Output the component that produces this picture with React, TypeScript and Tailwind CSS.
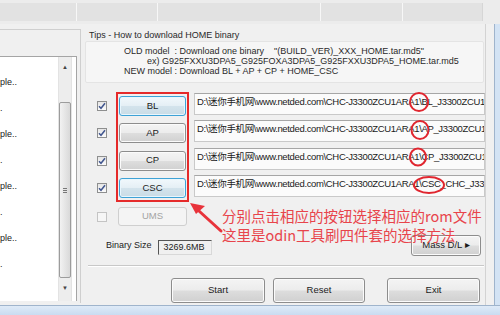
import React from "react";

const ui = "font-['Liberation_Sans','Noto_Sans_CJK_SC',sans-serif]";

function WinButton({
  label,
  focused,
  disabled,
  className,
}: {
  label: string;
  focused?: boolean;
  disabled?: boolean;
  className?: string;
}) {
  const look = disabled
    ? "border-[#cfcfcf] bg-[#f4f4f4] text-[#a3a3a3]"
    : focused
      ? "border-[#3ea2d6] bg-[linear-gradient(to_bottom,#f1f8fc_0%,#e5eff5_48%,#d3e3ec_52%,#c9dce6_100%)] text-[#1c1c1c] shadow-[inset_0_0_0_1px_#e8f6fd]"
      : "border-[#8d8d8d] bg-[linear-gradient(to_bottom,#f4f4f4_0%,#ececec_48%,#dddddd_52%,#d0d0d0_100%)] text-[#1c1c1c] shadow-[inset_0_0_0_1px_#fbfbfb]";
  return (
    <div
      className={`flex items-center justify-center rounded-[3px] border text-[9.5px] ${look} ${className ?? ""}`}
    >
      {label}
    </div>
  );
}

function Check({ on }: { on: boolean }) {
  return (
    <div
      className={`w-[10px] h-[10px] border ${
        on ? "border-[#8e8f8f] bg-[linear-gradient(to_bottom,#e6e6e6,#fbfbfb)]" : "border-[#c4c4c4] bg-[#f6f6f6]"
      } flex items-center justify-center`}
    >
      {on && (
        <svg width="8" height="8" viewBox="0 0 8 8">
          <path d="M1 4.2 L3 6.3 L7 1.3" fill="none" stroke="#41568f" strokeWidth="1.5" />
        </svg>
      )}
    </div>
  );
}

const prefix = "D:\\迷你手机网\\www.netded.com\\CHC-J3300ZCU1ARA1\\";
const fields = ["BL_J3300ZCU1ARA", "AP_J3300ZCU1ARA", "CP_J3300ZCU1AR", "CSC_CHC_J3300C"];

const logLines = ["ple..", ".", "ple..", ".", "ple..", ".", "ple..", "."];

export default function App() {
  return (
    <div className={`relative w-[500px] h-[315px] overflow-hidden bg-[#f0f0f0] ${ui}`}>
      <div className="flex flex-col h-[305px]">
        {/* top strip */}
        <div className="h-[24px] shrink-0 flex items-start pt-[3px] bg-[#ececec]">
          <div className="h-[18px] w-[77px] bg-[#e2e2e2] border-r border-[#f7f7f7]" />
          <div className="h-[18px] w-[81px] bg-[#e2e2e2] border-r border-[#f7f7f7]" />
          <div className="h-[18px] w-[163px] bg-[#e2e2e2] border-r border-[#f7f7f7]" />
          <div className="h-[18px] w-[82px] bg-[#e2e2e2] border-r border-[#f7f7f7]" />
          <div className="h-[18px] w-[80px] bg-[#e2e2e2] border-r border-[#d6d6d6]" />
        </div>

        <div className="flex flex-1">
          {/* left log panel */}
          <div className="w-[81px] shrink-0 pt-[5px]">
            <div className="h-[274px] border-t border-r border-[#cfcfcf] pt-[26px] pr-[3px]">
              <div className="h-[245px] flex bg-white border-t border-r border-[#a5a5a5] text-[9px] text-[#222]">
                <div className="w-[58px] flex flex-col pt-[12px] overflow-hidden">
                  {logLines.map((t, i) => (
                    <div key={i} className="h-[26px] leading-[26px] whitespace-nowrap">
                      {t}
                    </div>
                  ))}
                </div>
                <div className="w-[14px] flex flex-col items-center bg-[#ededed] border-x border-[#e3e3e3]">
                  <div className="h-[20px] flex items-center text-[6px] text-[#444]">▲</div>
                  <div className="mt-[25px] h-[176px] w-[12px] rounded-[2px] border border-[#9c9c9c] bg-[linear-gradient(to_right,#f2f2f2,#d9d9d9)] flex items-center justify-center">
                    <div className="flex flex-col gap-[1px]">
                      <div className="w-[4px] h-px bg-[#777]" />
                      <div className="w-[4px] h-px bg-[#777]" />
                      <div className="w-[4px] h-px bg-[#777]" />
                    </div>
                  </div>
                  <div className="h-[20px] flex items-center text-[6px] text-[#444]">▼</div>
                </div>
              </div>
            </div>
          </div>

          {/* right main panel */}
          <div className="w-[405px] shrink-0 flex flex-col border-r border-[#d3d3d3]">
            <div className="mt-[6px] ml-[8px] h-[11px] text-[9px] leading-[11px] text-[#2a2a2a]">
              Tips - How to download HOME binary
            </div>
            <div className="ml-[4px] mr-[1px] h-[42px] bg-[#f6f6f6] border border-[#e4e4e4] rounded-[2px] pt-[4px] text-[9px] leading-[10px] text-[#2a2a2a] whitespace-nowrap">
              <div className="pl-[38px]">
                OLD model&nbsp; : Download one binary&nbsp;&nbsp;&nbsp; "(BUILD_VER)_XXX_HOME.tar.md5"
              </div>
              <div className="pl-[61px]">ex) G925FXXU3DPA5_G925FOXA3DPA5_G925FXXU3DPA5_HOME.tar.md5</div>
              <div className="pl-[38px]">NEW model : Download BL + AP + CP + HOME_CSC</div>
            </div>

            {/* file rows */}
            <div className="mt-[9px] flex">
              <div className="ml-[16px] w-[10px] flex flex-col pt-[9px] gap-[17.3px]">
                <Check on />
                <Check on />
                <Check on />
                <Check on />
                <div className="mt-[2px]">
                  <Check on={false} />
                </div>
              </div>
              <div className="ml-[9px] w-[74px] flex flex-col">
                <div className="h-[110px] border-2 border-[#e52a2a] flex flex-col gap-[7.3px] pt-[2px] px-[1px]">
                  <WinButton label="BL" focused className="h-[20px]" />
                  <WinButton label="AP" className="h-[20px]" />
                  <WinButton label="CP" className="h-[20px]" />
                  <WinButton label="CSC" focused className="h-[20px]" />
                </div>
                <WinButton label="UMS" disabled className="mt-[5px] mx-[2px] h-[19px]" />
              </div>
              <div className="ml-[5px] w-[291px] flex flex-col pt-[1px] gap-[5.3px]">
                {fields.map((f) => (
                  <div
                    key={f}
                    className="h-[22px] border border-[#c9c9c9] border-t-[#a6a6a6] bg-[#fbfbfb] pl-[2px] pt-[2px] text-[9.5px] leading-[11px] tracking-[-0.35px] text-[#1a1a1a] whitespace-nowrap overflow-hidden"
                  >
                    {prefix}
                    {f}
                  </div>
                ))}
              </div>
            </div>

            {/* binary size + mass D/L */}
            <div className="mt-[9px] h-[21px] flex items-center">
              <div className="ml-[25px] text-[9px] text-[#222]">Binary Size</div>
              <div className="ml-[6px] mt-[4px] w-[54px] h-[15px] border border-[#d8d8d8] border-l-[#555] border-t-[#555] bg-[#f0f0f0] flex items-center justify-end pr-[6px] text-[9px] text-[#222]">
                3269.6MB
              </div>
              <WinButton label="Mass D/L ▸" className="ml-auto mr-[4px] w-[70px] h-[21px] text-[8.5px]" />
            </div>

            <div className="mt-[9px] ml-[7px] mr-[1px] border-t border-[#c8c8c8] border-b border-b-white" />

            <div className="mt-[11px] flex">
              <WinButton label="Start" className="ml-[90px] w-[94px] h-[25px]" />
              <WinButton label="Reset" className="ml-[8px] w-[92px] h-[25px]" />
              <WinButton label="Exit" className="ml-[22px] w-[93px] h-[25px]" />
            </div>
          </div>

          <div className="w-[8px] shrink-0" />
          <div className="w-[6px] shrink-0 border-l border-[#9fb4cc] bg-[#d3e3f4]" />
        </div>
      </div>
      <div className="h-[10px] border-t border-[#9fb4cc] bg-[linear-gradient(to_bottom,#dfeaf7,#c9dcf1)]" />

      {/* annotations */}
      <svg className="absolute left-0 top-0 pointer-events-none" width="500" height="315">
        <ellipse cx="419" cy="102" rx="9" ry="9" fill="none" stroke="#e0262f" strokeWidth="2" />
        <ellipse cx="420" cy="130" rx="8.5" ry="9" fill="none" stroke="#e0262f" strokeWidth="2" />
        <ellipse cx="418" cy="157" rx="8" ry="8.5" fill="none" stroke="#e0262f" strokeWidth="2" />
        <ellipse cx="429" cy="185" rx="15" ry="8" fill="none" stroke="#e0262f" strokeWidth="2" />
        <path d="M221 231 L199 211" stroke="#e8333b" strokeWidth="3" strokeLinecap="round" />
        <polygon points="190,203 205,206 196,214" fill="#e8333b" />
      </svg>
      <div className="absolute left-[222px] top-[206px] text-[14.5px] leading-[19px] text-[#e8444b] font-normal font-['Noto_Sans_CJK_SC',sans-serif] whitespace-nowrap pointer-events-none">
        <div>分别点击相应的按钮选择相应的rom文件</div>
        <div>这里是odin工具刷四件套的选择方法</div>
      </div>
    </div>
  );
}
